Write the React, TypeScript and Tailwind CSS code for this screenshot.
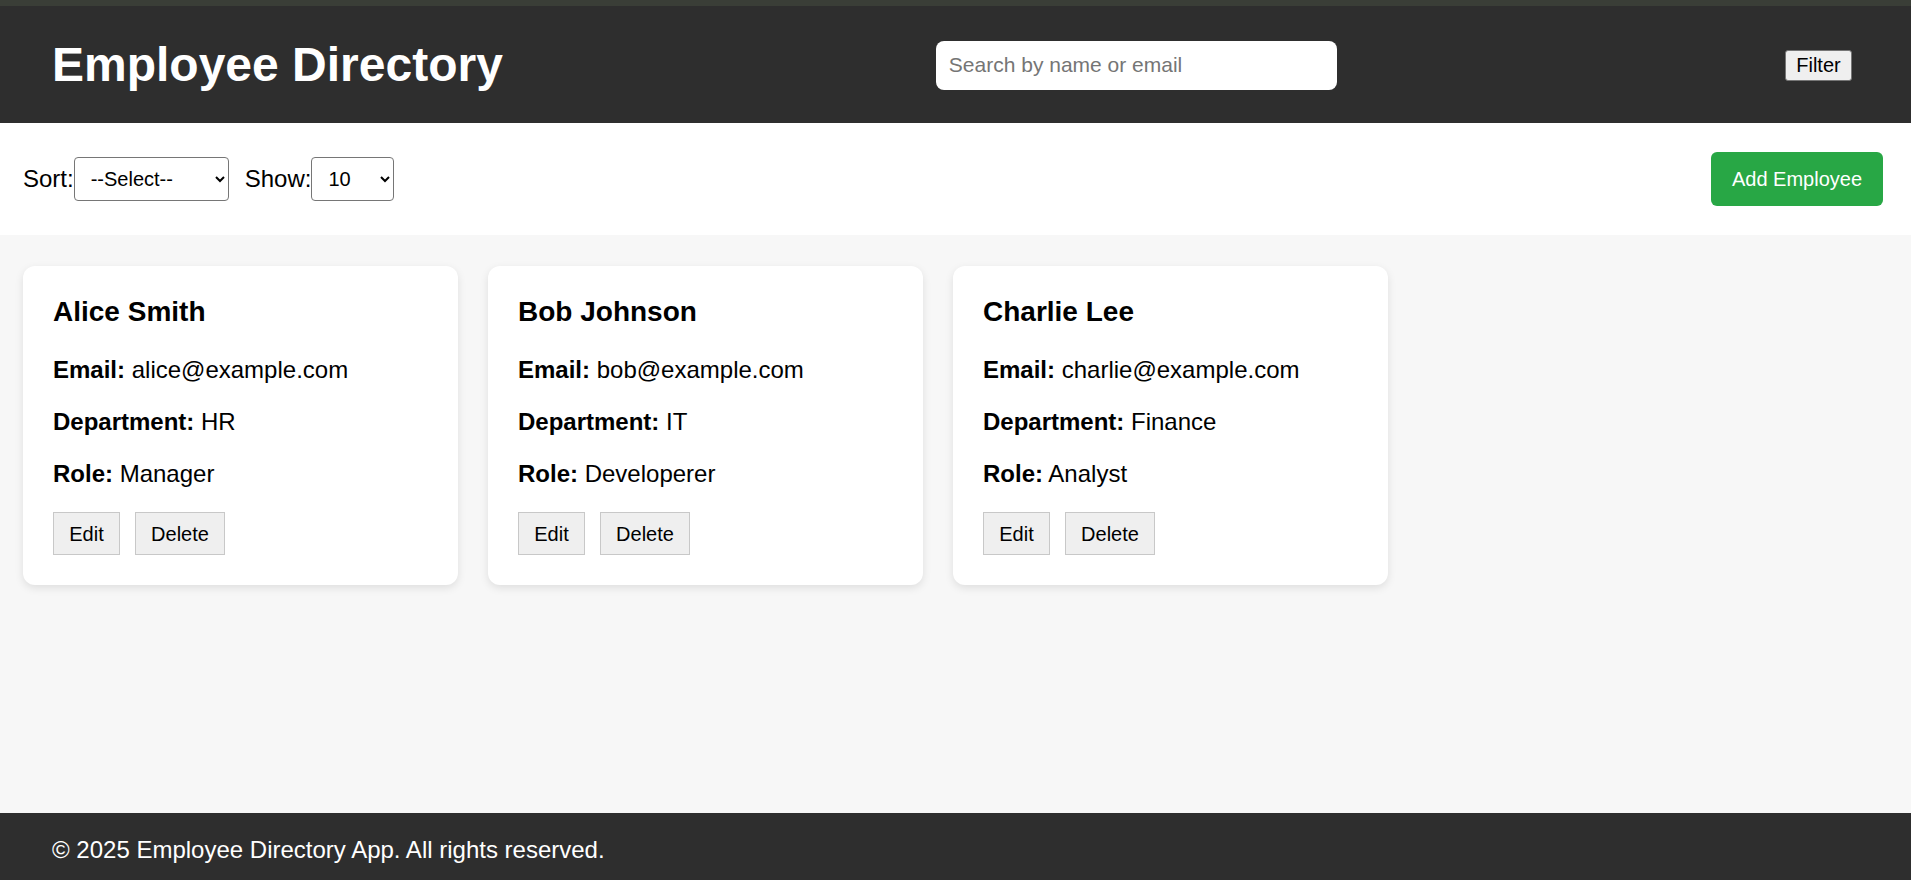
const employees = [
  { name: "Alice Smith", email: "alice@example.com", department: "HR", role: "Manager" },
  { name: "Bob Johnson", email: "bob@example.com", department: "IT", role: "Developerer" },
  { name: "Charlie Lee", email: "charlie@example.com", department: "Finance", role: "Analyst" },
];

function EmployeeCard({ emp }: { emp: (typeof employees)[number] }) {
  return (
    <div className="w-[435px] bg-white rounded-[12px] shadow-[0_3px_9px_rgba(0,0,0,0.1)] p-[30px] text-black">
      <h3 className="text-[28px] font-bold leading-[32px] mb-[28px]">{emp.name}</h3>
      <p className="text-[24px] leading-[28px] mb-[24px]">
        <strong>Email:</strong> {emp.email}
      </p>
      <p className="text-[24px] leading-[28px] mb-[24px]">
        <strong>Department:</strong> {emp.department}
      </p>
      <p className="text-[24px] leading-[28px] mb-[24px]">
        <strong>Role:</strong> {emp.role}
      </p>
      <div className="flex gap-[15px]">
        <button className="h-[43px] w-[67px] bg-[#efefef] border-[1.5px] border-[#c8c8c8] text-[20px]">
          Edit
        </button>
        <button className="h-[43px] w-[90px] bg-[#efefef] border-[1.5px] border-[#c8c8c8] text-[20px]">
          Delete
        </button>
      </div>
    </div>
  );
}

export default function App() {
  return (
    <div className="min-h-screen flex flex-col bg-[#f7f7f7] font-['Liberation_Sans',Arial,sans-serif]">
      <div className="h-[6px] bg-[#3a3e37]" />

      {/* Header */}
      <header className="h-[117px] bg-[#2e2e2e] flex items-center pl-[52px] pr-[59px]">
        <h1 className="text-[48px] font-bold text-white leading-none">Employee Directory</h1>
        <input
          type="text"
          placeholder="Search by name or email"
          className="ml-[433px] mt-[1px] w-[401px] h-[49px] bg-white rounded-[8px] px-[13px] text-[21px] text-black placeholder:text-[#757575] outline-none"
        />
        <button className="ml-auto mt-[1px] h-[31px] w-[67px] bg-[#efefef] border border-[#767676] rounded-[3px] text-[20px] text-black leading-none">
          Filter
        </button>
      </header>

      {/* Toolbar */}
      <div className="h-[112px] bg-white flex items-center pl-[23px] pr-[28px] text-[24px] text-black">
        <label>Sort:</label>
        <select className="w-[155px] h-[44px] border border-[#767676] rounded-[4px] bg-white text-[20px] pl-[12px] pr-[6px]">
          <option>--Select--</option>
          <option>Name</option>
          <option>Department</option>
        </select>
        <label className="ml-[16px]">Show:</label>
        <select className="w-[83px] h-[44px] border border-[#767676] rounded-[4px] bg-white text-[20px] pl-[12px] pr-[6px]">
          <option>10</option>
          <option>25</option>
          <option>50</option>
        </select>
        <button className="ml-auto h-[54px] w-[172px] bg-[#28a745] text-white rounded-[6px] text-[20px]">
          Add Employee
        </button>
      </div>

      {/* Cards */}
      <main className="flex-1 pt-[31px] pl-[23px]">
        <div className="flex items-start gap-[30px]">
          {employees.map((emp) => (
            <EmployeeCard key={emp.email} emp={emp} />
          ))}
        </div>
      </main>

      {/* Footer */}
      <footer className="h-[67px] bg-[#2e2e2e] pl-[52px] pt-[23px] text-white text-[24px] leading-[28px]">
        © 2025 Employee Directory App. All rights reserved.
      </footer>
    </div>
  );
}
